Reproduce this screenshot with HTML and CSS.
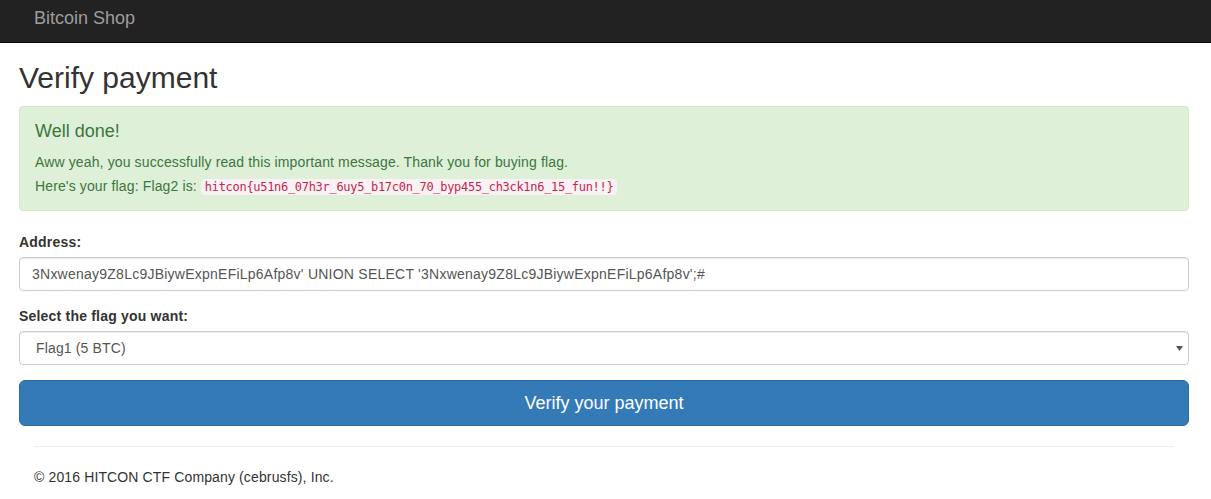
FILE: index.html
```html
<!DOCTYPE html>
<html lang="en">
<head>
<meta charset="utf-8">
<title>Bitcoin Shop</title>
<link rel="stylesheet" href="styles.css">
</head>
<body>
<nav class="navbar">
  <span class="brand">Bitcoin Shop</span>
</nav>
<main class="container">
  <h1 class="page-title">Verify payment</h1>
  <div class="alert">
    <h4 class="alert-heading">Well done!</h4>
    <p>Aww yeah, you successfully read this important message. Thank you for buying flag.</p>
    <p>Here's your flag: Flag2 is: <code>hitcon{u51n6_07h3r_6uy5_b17c0n_70_byp455_ch3ck1n6_15_fun!!}</code></p>
  </div>
  <form class="pay-form">
    <div class="form-group">
      <label class="form-label" for="address">Address:</label>
      <input class="form-control input-text" id="address" type="text" value="3Nxwenay9Z8Lc9JBiywExpnEFiLp6Afp8v' UNION SELECT '3Nxwenay9Z8Lc9JBiywExpnEFiLp6Afp8v';#">
    </div>
    <div class="form-group">
      <label class="form-label" for="flag">Select the flag you want:</label>
      <div class="select-wrap">
        <select class="form-control select" id="flag">
          <option>Flag1 (5 BTC)</option>
          <option>Flag2</option>
        </select>
        <svg class="select-arrow" width="7" height="5" viewBox="0 0 7 5"><path d="M0 0H7L3.5 5Z" fill="#555"/></svg>
      </div>
    </div>
    <button class="btn-primary" type="button">Verify your payment</button>
  </form>
  <footer class="footer">
    <hr class="footer-rule">
    <p class="footer-text">&copy; 2016 HITCON CTF Company (cebrusfs), Inc.</p>
  </footer>
</main>
</body>
</html>
```
FILE: styles.css
```css
* { box-sizing: border-box; }
html, body { margin: 0; padding: 0; background: #fff; }
body {
  font-family: "Liberation Sans", Arial, Helvetica, sans-serif;
  font-size: 14px;
  line-height: 1.42857143;
  color: #333;
  letter-spacing: 0.13px;
}
.navbar {
  height: 43px;
  background: #222;
  border-bottom: 1px solid #080808;
  padding: 8px 0 0 34px;
}
.brand {
  display: block;
  font-size: 18px;
  line-height: 20px;
  color: #9d9d9d;
  letter-spacing: 0;
}
.container {
  width: 1189px;
  padding-left: 19px;
}
.page-title {
  margin: 18px 0 12px;
  font-size: 30px;
  font-weight: 500;
  line-height: 1.1;
  color: #333;
  letter-spacing: 0;
}
.alert {
  background: #dff0d8;
  border: 1px solid #d6e9c6;
  border-radius: 4px;
  color: #3c763d;
  padding: 15px 15px 14px;
  margin-bottom: 21px;
}
.alert-heading {
  margin: 0 0 10px;
  font-size: 18px;
  font-weight: 500;
  line-height: 1.1;
  color: inherit;
  letter-spacing: 0;
}
.alert p { margin: 0; }
.alert p + p { margin-top: 4px; }
code {
  font-family: "DejaVu Sans Mono", "Liberation Mono", monospace;
  font-size: 12px;
  letter-spacing: -0.3px;
  padding: 1px 4px;
  color: #c7254e;
  background: #f9f2f4;
  border-radius: 4px;
}
.pay-form { margin: 0; }
.form-group { margin-bottom: 15px; }
.form-label {
  display: inline-block;
  margin-bottom: 5px;
  font-weight: 700;
  letter-spacing: 0.2px;
}
.form-control {
  display: block;
  width: 100%;
  height: 34px;
  padding: 6px 12px;
  font-family: inherit;
  font-size: 14px;
  line-height: 1.42857143;
  color: #555;
  background: #fff;
  border: 1px solid #ccc;
  border-radius: 4px;
  box-shadow: inset 0 1px 1px rgba(0,0,0,.075);
  margin: 0;
  letter-spacing: 0.15px;
}
.input-text { letter-spacing: 0.24px; }
.select-wrap { position: relative; }
.select {
  -webkit-appearance: none;
  appearance: none;
  padding-left: 16px;
}
.select-arrow {
  position: absolute;
  right: 6px;
  top: 15px;
}
.btn-primary {
  display: block;
  width: 100%;
  padding: 10px 16px;
  font-family: inherit;
  font-size: 18px;
  line-height: 1.3333333;
  color: #fff;
  background: #337ab7;
  border: 1px solid #2e6da4;
  border-radius: 6px;
  text-align: center;
  cursor: pointer;
  letter-spacing: 0;
}
.footer { padding: 0 15px; }
.footer-rule {
  margin: 20px 0;
  border: 0;
  border-top: 1px solid #eee;
  height: 0;
}
.footer-text { margin: 0 0 10px; }
```
